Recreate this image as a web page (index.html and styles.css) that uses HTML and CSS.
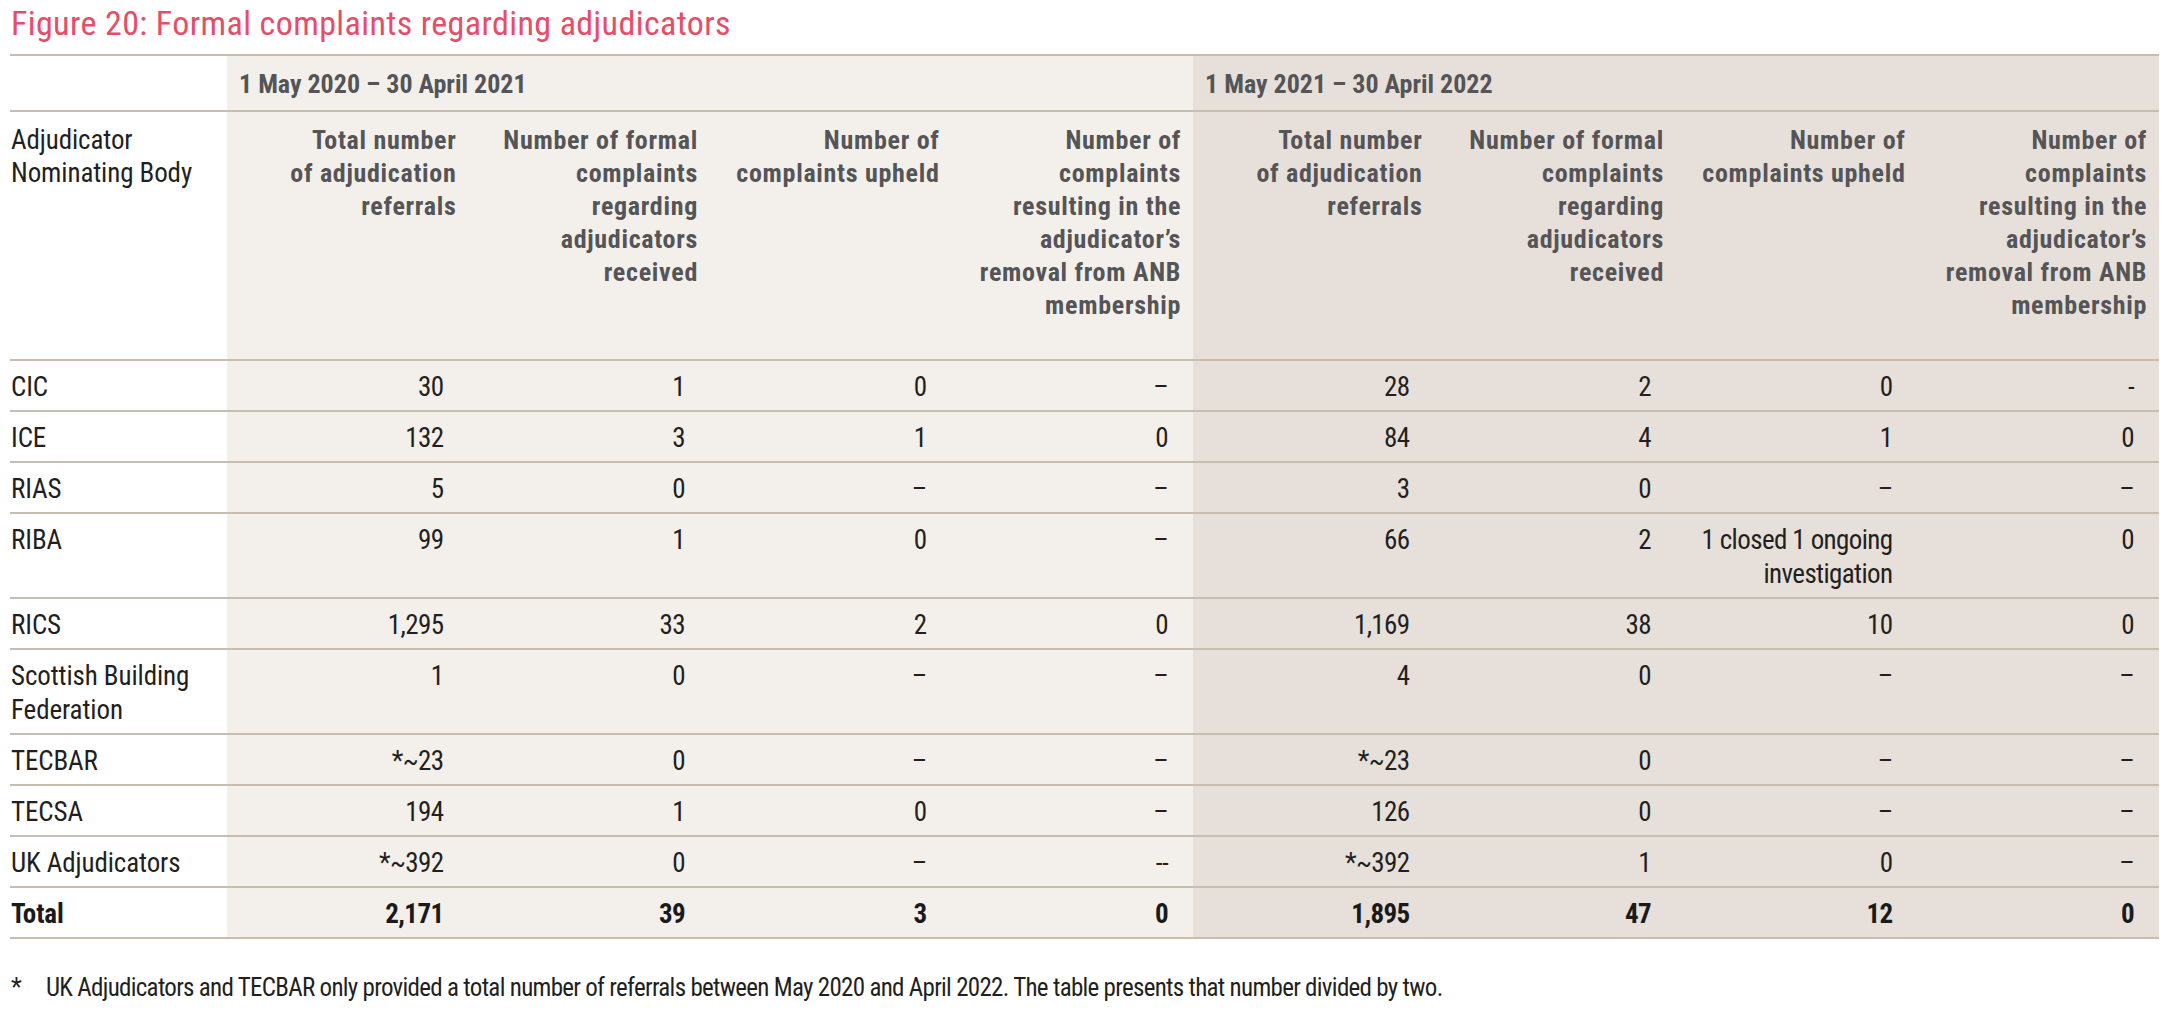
FILE: index.html
```html
<!DOCTYPE html>
<html lang="en">
<head>
<meta charset="utf-8">
<title>Figure 20: Formal complaints regarding adjudicators</title>
<link rel="stylesheet" href="styles.css">
</head>
<body>
<main class="page">
  <h1 class="title">Figure 20: Formal complaints regarding adjudicators</h1>
  <table class="complaints">
    <colgroup>
      <col class="c-name">
      <col class="c-data"><col class="c-data"><col class="c-data"><col class="c-data">
      <col class="c-data"><col class="c-data"><col class="c-data"><col class="c-data">
    </colgroup>
    <thead>
      <tr class="period-row">
        <th class="blank"></th>
        <th class="period p1" colspan="4">1 May 2020 – 30 April 2021</th>
        <th class="period p2" colspan="4">1 May 2021 – 30 April 2022</th>
      </tr>
      <tr class="head-row">
        <th class="name-head">Adjudicator<br>Nominating Body</th>
        <th class="p1">Total number<br>of adjudication<br>referrals</th>
        <th class="p1">Number of formal<br>complaints<br>regarding<br>adjudicators<br>received</th>
        <th class="p1">Number of<br>complaints upheld</th>
        <th class="p1">Number of<br>complaints<br>resulting in the<br>adjudicator’s<br>removal from ANB<br>membership</th>
        <th class="p2">Total number<br>of adjudication<br>referrals</th>
        <th class="p2">Number of formal<br>complaints<br>regarding<br>adjudicators<br>received</th>
        <th class="p2">Number of<br>complaints upheld</th>
        <th class="p2">Number of<br>complaints<br>resulting in the<br>adjudicator’s<br>removal from ANB<br>membership</th>
      </tr>
    </thead>
    <tbody>
      <tr>
        <td class="name">CIC</td>
        <td class="p1">30</td><td class="p1">1</td><td class="p1">0</td><td class="p1">–</td>
        <td class="p2">28</td><td class="p2">2</td><td class="p2">0</td><td class="p2">-</td>
      </tr>
      <tr>
        <td class="name">ICE</td>
        <td class="p1">132</td><td class="p1">3</td><td class="p1">1</td><td class="p1">0</td>
        <td class="p2">84</td><td class="p2">4</td><td class="p2">1</td><td class="p2">0</td>
      </tr>
      <tr>
        <td class="name">RIAS</td>
        <td class="p1">5</td><td class="p1">0</td><td class="p1">–</td><td class="p1">–</td>
        <td class="p2">3</td><td class="p2">0</td><td class="p2">–</td><td class="p2">–</td>
      </tr>
      <tr>
        <td class="name">RIBA</td>
        <td class="p1">99</td><td class="p1">1</td><td class="p1">0</td><td class="p1">–</td>
        <td class="p2">66</td><td class="p2">2</td><td class="p2">1 closed 1 ongoing<br>investigation</td><td class="p2">0</td>
      </tr>
      <tr>
        <td class="name">RICS</td>
        <td class="p1">1,295</td><td class="p1">33</td><td class="p1">2</td><td class="p1">0</td>
        <td class="p2">1,169</td><td class="p2">38</td><td class="p2">10</td><td class="p2">0</td>
      </tr>
      <tr>
        <td class="name">Scottish Building<br>Federation</td>
        <td class="p1">1</td><td class="p1">0</td><td class="p1">–</td><td class="p1">–</td>
        <td class="p2">4</td><td class="p2">0</td><td class="p2">–</td><td class="p2">–</td>
      </tr>
      <tr>
        <td class="name">TECBAR</td>
        <td class="p1">*~23</td><td class="p1">0</td><td class="p1">–</td><td class="p1">–</td>
        <td class="p2">*~23</td><td class="p2">0</td><td class="p2">–</td><td class="p2">–</td>
      </tr>
      <tr>
        <td class="name">TECSA</td>
        <td class="p1">194</td><td class="p1">1</td><td class="p1">0</td><td class="p1">–</td>
        <td class="p2">126</td><td class="p2">0</td><td class="p2">–</td><td class="p2">–</td>
      </tr>
      <tr>
        <td class="name">UK Adjudicators</td>
        <td class="p1">*~392</td><td class="p1">0</td><td class="p1">–</td><td class="p1">--</td>
        <td class="p2">*~392</td><td class="p2">1</td><td class="p2">0</td><td class="p2">–</td>
      </tr>
      <tr class="total">
        <td class="name">Total</td>
        <td class="p1">2,171</td><td class="p1">39</td><td class="p1">3</td><td class="p1">0</td>
        <td class="p2">1,895</td><td class="p2">47</td><td class="p2">12</td><td class="p2">0</td>
      </tr>
    </tbody>
  </table>
  <p class="footnote"><span class="mark">*</span><span class="note">UK Adjudicators and TECBAR only provided a total number of referrals between May 2020 and April 2022. The table presents that number divided by two.</span></p>
</main>
</body>
</html>
```
FILE: styles.css
```css
html, body {
  margin: 0;
  padding: 0;
  background: #ffffff;
}

body {
  font-family: "Roboto Condensed", "Roboto", "Liberation Sans", sans-serif;
  color: #231f20;
}

.page {
  padding: 3px 0 0 10px;
}

.title {
  margin: 0 0 11px 1px;
  font-size: 34px;
  line-height: 40px;
  font-weight: 400;
  letter-spacing: 0.4px;
  color: #e64d69;
}

.complaints {
  width: 2149px;
  table-layout: fixed;
  border-collapse: collapse;
  border-top: 2px solid #c9bdaf;
}

.c-name { width: 217px; }
.c-data { width: 241.5px; }

.complaints tr {
  border-bottom: 2px solid #c9bdaf;
}

.p1 { background: #f3f0eb; }
.p2 { background: #e7e0da; }

.complaints th {
  font-weight: 700;
  font-size: 26px;
  line-height: 33px;
  color: #555557;
  text-align: right;
  vertical-align: top;
  padding: 12px 12px 37px 4px;
  letter-spacing: 0.7px;
}

.period-row th {
  padding: 11px 12px 9px 12px;
  line-height: 34px;
  text-align: left;
  letter-spacing: 0;
}

.head-row .name-head {
  font-weight: 400;
  font-size: 27px;
  color: #231f20;
  text-align: left;
  padding-left: 1px;
  letter-spacing: -0.1px;
}

.complaints td {
  font-size: 27px;
  line-height: 34px;
  text-align: right;
  vertical-align: top;
  padding: 9px 25px 6px 8px;
  letter-spacing: -0.6px;
}

.complaints td.name {
  text-align: left;
  padding-left: 1px;
  padding-right: 4px;
  letter-spacing: -0.1px;
}

.total td {
  font-weight: 700;
  color: #1a1a1a;
}

.footnote {
  display: flex;
  margin: 32px 0 0 1px;
  font-size: 25px;
  line-height: 34px;
  letter-spacing: -0.7px;
  color: #231f20;
}

.footnote .mark {
  width: 35px;
  flex: none;
}
```
